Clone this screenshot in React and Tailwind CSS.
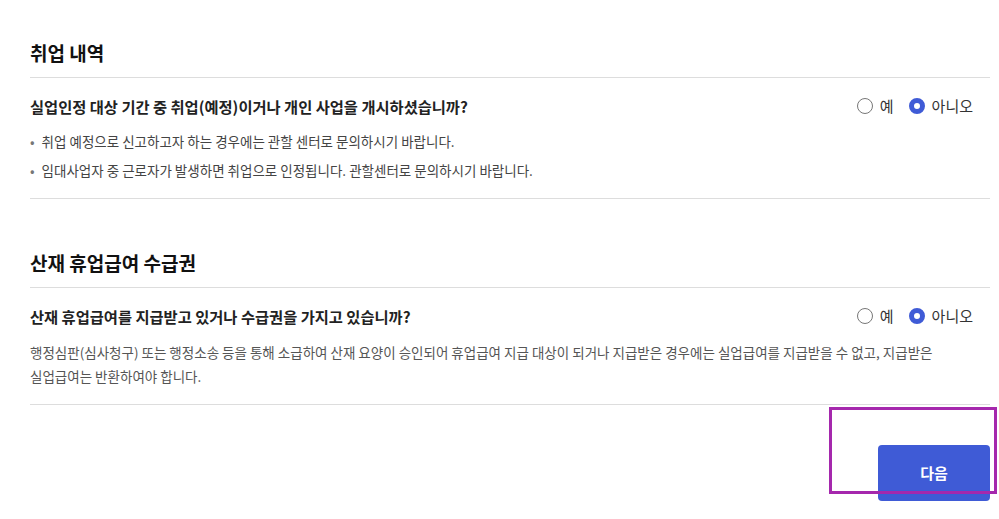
import React from 'react'

const font = { fontFamily: '"Noto Sans CJK KR", "Noto Sans", sans-serif' }

function Radio({ checked, label }) {
  return (
    <label className="flex items-center gap-[7px] cursor-pointer">
      {checked ? (
        <span className="w-4 h-4 rounded-full border-[5px] border-[#3f5bd6] bg-white" />
      ) : (
        <span className="w-4 h-4 rounded-full border border-[#777] bg-white" />
      )}
      <span className="text-[15px] text-[#333] leading-6">{label}</span>
    </label>
  )
}

function YesNo() {
  return (
    <div className="flex items-center gap-[15px] pr-[17px]">
      <Radio label="예" />
      <Radio checked label="아니오" />
    </div>
  )
}

export default function App() {
  return (
    <div style={font} className="relative w-[999px] h-[519px] bg-white overflow-hidden break-keep">
      <div className="ml-[30px] w-[960px]">
        {/* 취업 내역 */}
        <section className="pt-10">
          <h2 className="text-[19px] leading-[26px] font-bold text-[#111] pb-[11px] border-b border-[#ddd]">
            취업 내역
          </h2>
          <div className="pt-4 pb-[18px] border-b border-[#ddd]">
            <div className="flex items-center justify-between">
              <p className="text-[15.3px] leading-6 font-bold text-[#222]">
                실업인정 대상 기간 중 취업(예정)이거나 개인 사업을 개시하셨습니까?
              </p>
              <YesNo />
            </div>
            <ul className="mt-[13px] flex flex-col gap-[9px] text-[13.5px] leading-5 text-[#444]">
              <li className="flex gap-[7px]">
                <span className="text-[#777]">•</span>
                <span>취업 예정으로 신고하고자 하는 경우에는 관할 센터로 문의하시기 바랍니다.</span>
              </li>
              <li className="flex gap-[7px]">
                <span className="text-[#777]">•</span>
                <span>임대사업자 중 근로자가 발생하면 취업으로 인정됩니다. 관할센터로 문의하시기 바랍니다.</span>
              </li>
            </ul>
          </div>
        </section>

        {/* 산재 휴업급여 수급권 */}
        <section className="mt-[51px]">
          <h2 className="text-[19px] leading-[26px] font-bold text-[#111] pb-[11px] border-b border-[#ddd]">
            산재 휴업급여 수급권
          </h2>
          <div className="pt-4 pb-4 border-b border-[#ddd]">
            <div className="flex items-center justify-between">
              <p className="text-[15.3px] leading-6 font-bold text-[#222]">
                산재 휴업급여를 지급받고 있거나 수급권을 가지고 있습니까?
              </p>
              <YesNo />
            </div>
            <p className="mt-3 text-[13.5px] leading-6 text-[#555] break-keep">
              행정심판(심사청구) 또는 행정소송 등을 통해 소급하여 산재 요양이 승인되어 휴업급여 지급 대상이 되거나 지급받은 경우에는 실업급여를 지급받을 수 없고, 지급받은 실업급여는 반환하여야 합니다.
            </p>
          </div>
        </section>

        <div className="mt-10 flex justify-end">
          <button className="w-[112px] h-[56px] rounded-[4px] bg-[#3f5bd6] text-white text-[15px] font-bold">
            다음
          </button>
        </div>
      </div>

      {/* highlight overlay */}
      <div className="absolute left-[829px] top-[407px] w-[168px] h-[87px] border-[3px] border-[#a528ad] pointer-events-none" />
    </div>
  )
}
